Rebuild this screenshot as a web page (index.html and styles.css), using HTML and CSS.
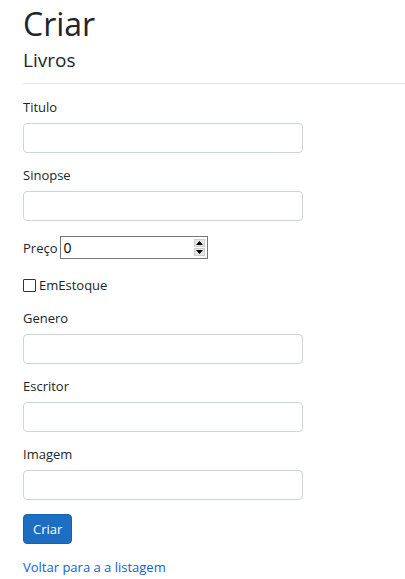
FILE: index.html
```html
<!DOCTYPE html>
<html lang="pt">
<head>
<meta charset="utf-8">
<title>Criar</title>
<link rel="stylesheet" href="styles.css">
</head>
<body>
<main class="page">
  <h1 class="title">Criar</h1>
  <h4 class="subtitle">Livros</h4>
  <hr class="rule">
  <form class="form">
    <div class="group">
      <label class="label" for="titulo">Titulo</label>
      <input class="control" id="titulo" type="text">
    </div>
    <div class="group">
      <label class="label" for="sinopse">Sinopse</label>
      <input class="control" id="sinopse" type="text">
    </div>
    <div class="group inline-group">
      <label class="inline-label" for="preco">Preço</label>
      <span class="number">
        <input class="number-input" id="preco" type="text" value="0">
        <span class="spinner">
          <span class="spin-btn"><svg width="7" height="4" viewBox="0 0 7 4"><path d="M0 4 L3.5 0 L7 4 Z" fill="#000"/></svg></span>
          <span class="spin-btn"><svg width="7" height="4" viewBox="0 0 7 4"><path d="M0 0 L7 0 L3.5 4 Z" fill="#000"/></svg></span>
        </span>
      </span>
    </div>
    <div class="group check-group">
      <input class="check" id="estoque" type="checkbox">
      <label class="check-label" for="estoque">EmEstoque</label>
    </div>
    <div class="group">
      <label class="label" for="genero">Genero</label>
      <input class="control" id="genero" type="text">
    </div>
    <div class="group">
      <label class="label" for="escritor">Escritor</label>
      <input class="control" id="escritor" type="text">
    </div>
    <div class="group">
      <label class="label" for="imagem">Imagem</label>
      <input class="control" id="imagem" type="text">
    </div>
    <div class="actions">
      <button class="btn" type="button">Criar</button>
    </div>
  </form>
  <div class="back">
    <a class="link" href="#">Voltar para a a listagem</a>
  </div>
</main>
</body>
</html>
```

FILE: styles.css
```css
html, body {
  margin: 0;
  padding: 0;
  background: #fff;
}

body {
  font-family: "Open Sans", "Noto Sans", sans-serif;
  font-size: 13px;
  color: #212529;
}

.page {
  padding: 0 0 0 23px;
}

.title {
  font-size: 32px;
  font-weight: 400;
  line-height: 44px;
  margin: 2px 0 0;
}

.subtitle {
  font-size: 19px;
  font-weight: 400;
  line-height: 24px;
  margin: 2px 0 0;
}

.rule {
  border: 0;
  border-top: 1px solid rgba(0, 0, 0, 0.1);
  margin: 11px 0 15px;
}

.form {
  display: flex;
  flex-direction: column;
}

.group {
  margin-bottom: 14px;
}

.label {
  display: block;
  line-height: 16px;
  margin-bottom: 8px;
}

.control {
  display: block;
  box-sizing: border-box;
  width: 280px;
  height: 30px;
  border: 1px solid #ced4da;
  border-radius: 4px;
  padding: 0 10px;
  font: inherit;
  background: #fff;
}

.inline-group {
  display: flex;
  align-items: center;
  height: 25px;
}

.inline-label {
  margin-right: 3px;
}

.number {
  display: inline-flex;
  align-items: center;
  box-sizing: border-box;
  width: 148px;
  height: 23px;
  border: 1px solid #767676;
  background: #fff;
}

.number-input {
  flex: 1;
  min-width: 0;
  border: 0;
  outline: 0;
  padding: 0 0 0 2px;
  font: inherit;
  font-size: 14px;
  color: #000;
  height: 21px;
  background: transparent;
}

.spinner {
  display: flex;
  flex-direction: column;
  width: 11px;
  margin-right: 2px;
  gap: 1px;
}

.spin-btn {
  display: flex;
  align-items: center;
  justify-content: center;
  height: 8px;
  background: #e6e6e6;
  border: 1px solid #cfcfcf;
  box-sizing: border-box;
}

.check-group {
  display: flex;
  align-items: center;
  height: 22px;
}

.check {
  appearance: none;
  -webkit-appearance: none;
  box-sizing: border-box;
  width: 13px;
  height: 13px;
  margin: 0 3px 0 0;
  border: 1px solid #333;
  border-radius: 1px;
  background: #fff;
}

.check-label {
  line-height: 22px;
}

.btn {
  box-sizing: border-box;
  height: 30px;
  padding: 0 9px;
  font: inherit;
  color: #fff;
  background: #1b6ec2;
  border: 1px solid #1861ac;
  border-radius: 4px;
}

.back {
  margin-top: 13px;
  line-height: 21px;
}

.link {
  color: #0366d6;
  text-decoration: none;
}
```
